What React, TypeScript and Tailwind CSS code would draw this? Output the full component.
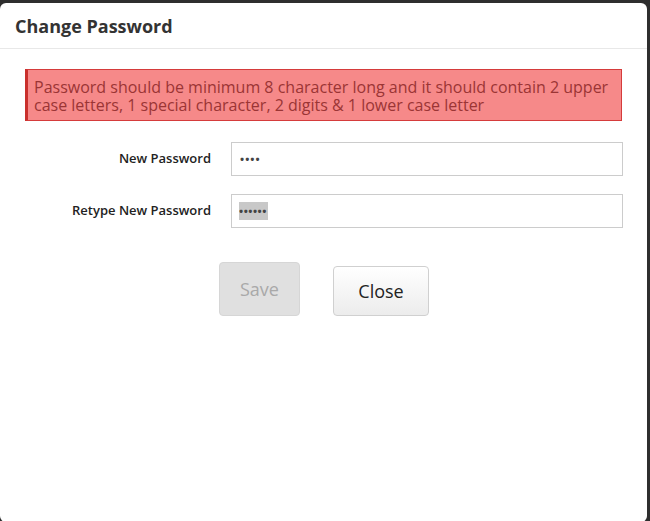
export default function App() {
  const font = { fontFamily: '"Open Sans", "Noto Sans", sans-serif' }

  return (
    <div className="w-[650px] h-[521px] bg-[#2e2e2e] pt-[3px] overflow-hidden" style={font}>
      <div className="w-[647px] h-[519px] bg-white rounded-[6px] flex flex-col">
        {/* header */}
        <div className="h-[46px] border-b border-[#e8e8e8] pl-[15px] flex items-center">
          <h2 className="text-[18px] font-bold text-[#333] leading-none">Change Password</h2>
        </div>

        <div className="px-[25px] pt-[20px]">
          <div className="bg-[#f68989] border border-[#d53b3b] border-l-[3px] border-l-[#c9302c] pl-[6px] pr-2 pt-[8px] pb-[6px] text-[16px] leading-[18px] text-[#9b3535]">
            Password should be minimum 8 character long and it should contain 2 upper case letters, 1 special
            character, 2 digits &amp; 1 lower case letter
          </div>
        </div>

        <div className="flex flex-col gap-[18px] mt-[21px]">
          <div className="flex items-center">
            <label className="w-[211px] text-right text-[13px] font-semibold text-[#222]">New Password</label>
            <div className="ml-[20px] w-[392px] h-[34px] border border-[#cccccc] flex items-center pl-[8px]">
              <span className="text-[11px] font-bold tracking-[1px] text-[#444]">••••</span>
            </div>
          </div>
          <div className="flex items-center">
            <label className="w-[211px] text-right text-[13px] font-semibold text-[#222]">Retype New Password</label>
            <div className="ml-[20px] w-[392px] h-[34px] border border-[#cccccc] flex items-center pl-[7px]">
              <span className="bg-[#c8c8c8] h-[18px] flex items-center text-[11px] font-bold tracking-[0.5px] text-[#444] pr-[1px]">
                ••••••
              </span>
            </div>
          </div>
        </div>

        <div className="flex items-end mt-[34px] pl-[219px] gap-[33px]">
          <button className="w-[81px] h-[54px] rounded-[4px] bg-[#e0e0e0] border border-[#d6d6d6] text-[18px] text-[#a9a9a9]">
            Save
          </button>
          <button className="w-[96px] h-[50px] rounded-[4px] bg-gradient-to-b from-white to-[#ececec] border border-[#d0d0d0] text-[18px] text-[#222]">
            Close
          </button>
        </div>
      </div>
    </div>
  )
}
